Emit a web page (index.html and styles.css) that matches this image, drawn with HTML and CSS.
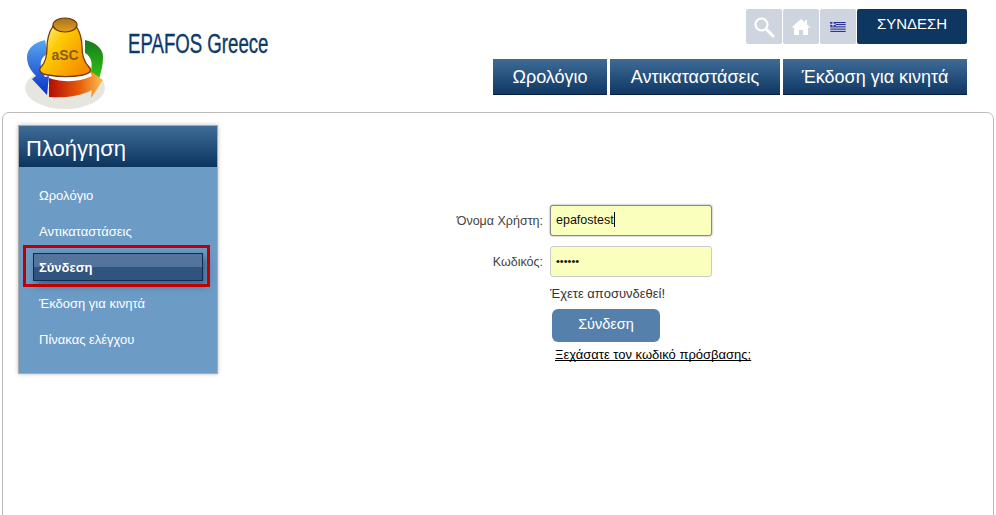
FILE: index.html
```html
<!DOCTYPE html>
<html lang="el">
<head>
    <meta charset="UTF-8">
    <meta name="viewport" content="width=device-width, initial-scale=1.0">
    <title>EPAFOS Greece</title>
    <link rel="stylesheet" href="styles.css">
</head>
<body>
    <header class="top">
        <div class="brand">
            <svg class="logo" width="90" height="100" viewBox="5 1 90 100">
                <defs>
                    <linearGradient id="bellFill" x1="0" y1="0" x2="1" y2="0.7">
                        <stop offset="0" stop-color="#fff6b0"/>
                        <stop offset="0.4" stop-color="#fdca00"/>
                        <stop offset="1" stop-color="#f68c00"/>
                    </linearGradient>
                    <linearGradient id="knobFill" x1="0" y1="0" x2="0" y2="1">
                        <stop offset="0" stop-color="#a8721c"/>
                        <stop offset="1" stop-color="#e0a020"/>
                    </linearGradient>
                    <linearGradient id="redArrow" x1="0" y1="0" x2="1" y2="0">
                        <stop offset="0" stop-color="#b40c08"/>
                        <stop offset="0.55" stop-color="#e65a08"/>
                        <stop offset="1" stop-color="#fdc050"/>
                    </linearGradient>
                    <linearGradient id="blueArrow" x1="0" y1="0" x2="0" y2="1">
                        <stop offset="0" stop-color="#58a8f0"/>
                        <stop offset="1" stop-color="#0a2fc8"/>
                    </linearGradient>
                    <linearGradient id="greenArrow" x1="0" y1="0" x2="0" y2="1">
                        <stop offset="0" stop-color="#167a20"/>
                        <stop offset="1" stop-color="#30c410"/>
                    </linearGradient>
                </defs>
                <ellipse cx="50" cy="78" rx="40" ry="21" fill="#e6e6de"/>
                <ellipse cx="50" cy="66" rx="30" ry="13" fill="#fff"/>
                <path d="M30 30 C18 33 12 39 12 47 C12 54 15 60 21 66 L17 69 L32 85 L34 66 L30 67 C27 62 25 56 26 52 C27 47 30 45 33 44Z" fill="url(#blueArrow)"/>
                <path d="M70 30 C82 33 88 39 88 47 C88 56 86 62 84 69 L76 62 C77 56 77 51 75 48 C73 45 72 44 70 43Z" fill="url(#greenArrow)"/>
                <path d="M34 68 C50 73 64 72 77 66 L74 60 L88 70 L76 88 L77 80 C64 87 47 88 34 87Z" fill="url(#redArrow)"/>
                <path d="M38 16 C34 22 32 30 32 38 C32 48 30 53 26 57 C23 60 25 64 33 65 C44 67 58 67 68 65 C76 63 77 60 74 57 C69 52 67 46 67 37 C67 29 65 22 61 16Z" fill="url(#bellFill)" stroke="#7a3c00" stroke-width="1.300"/>
                <ellipse cx="50" cy="15" rx="12" ry="7" fill="url(#knobFill)" stroke="#6a3400" stroke-width="1.200"/>
                <text class="logo-text" x="50" y="50" text-anchor="middle">aSC</text>
            </svg>
            <div class="site-name">EPAFOS Greece</div>
        </div>
        <div class="top-right">
            <div class="tools">
                <a class="tool" href="#">
                    <svg width="24" height="24" viewBox="0 0 24 24">
                        <circle cx="9.500" cy="9.500" r="6" fill="none" stroke="#fff" stroke-width="2.200"/>
                        <path d="M14.500 14.500 L21 21" stroke="#fff" stroke-width="3" stroke-linecap="round"/>
                    </svg>
                </a>
                <a class="tool" href="#">
                    <svg width="20" height="18" viewBox="0 0 20 18">
                        <path d="M10 1 L0.500 9.500 L3 9.500 L3 17 L8 17 L8 12 L12 12 L12 17 L17 17 L17 9.500 L19.500 9.500 L16 6.400 L16 2 L14 2 L14 4.600Z" fill="#fff"/>
                    </svg>
                </a>
                <a class="tool" href="#">
                    <svg width="16" height="10" viewBox="0 0 17 11">
                        <rect width="17" height="11" fill="#eef0f8"/>
                        <path d="M0 0.600H17M0 3H17M0 5.400H17M0 7.800H17M0 10.200H17" stroke="#2a3496" stroke-width="1.400"/>
                        <rect width="6" height="5" fill="#2a3496"/>
                        <path d="M3 0V5M0 2.500H6" stroke="#fff" stroke-width="1"/>
                    </svg>
                </a>
                <a class="login-tab" href="#">ΣΥΝΔΕΣΗ</a>
            </div>
            <nav class="main-nav">
                <a href="#">Ωρολόγιο</a>
                <a href="#">Αντικαταστάσεις</a>
                <a href="#">Έκδοση για κινητά</a>
            </nav>
        </div>
    </header>

    <main class="panel">
        <aside class="sidebar">
            <h2>Πλοήγηση</h2>
            <ul>
                <li><a href="#">Ωρολόγιο</a></li>
                <li><a href="#">Αντικαταστάσεις</a></li>
                <li class="current"><a href="#">Σύνδεση</a></li>
                <li><a href="#">Έκδοση για κινητά</a></li>
                <li><a href="#">Πίνακας ελέγχου</a></li>
            </ul>
        </aside>

        <form class="login-form" onsubmit="return false">
            <div class="row">
                <label for="user">Όνομα Χρήστη:</label>
                <div class="field focused" id="user">epafostest<span class="caret"></span></div>
            </div>
            <div class="row">
                <label for="pass">Κωδικός:</label>
                <div class="field dots" id="pass">••••••</div>
            </div>
            <div class="form-rest">
                <p class="msg">Έχετε αποσυνδεθεί!</p>
                <button type="submit">Σύνδεση</button>
                <a class="forgot" href="#">Ξεχάσατε τον κωδικό πρόσβασης;</a>
            </div>
        </form>

        <div class="highlight"></div>
    </main>
</body>
</html>
```

FILE: styles.css
```css
html, body {
    height: 515px;
    overflow: hidden;
}

body {
    margin: 0;
    background: #fff;
    font-family: 'Liberation Sans', Arial, sans-serif;
    color: #333;
}

a {
    text-decoration: none;
}

.top {
    display: flex;
    justify-content: space-between;
    height: 112px;
    padding: 0 29px 0 20px;
    box-sizing: border-box;
}

.brand {
    display: flex;
    align-items: flex-start;
}

.logo {
    margin-top: 11px;
    flex: none;
}

.logo-text {
    font-family: 'Liberation Sans', Arial, sans-serif;
    font-size: 14px;
    font-weight: bold;
    fill: #8a5a20;
}

.site-name {
    margin: 28px 0 0 18px;
    font-size: 27px;
    line-height: 32px;
    color: #0e3a68;
    white-space: nowrap;
    transform: scaleX(0.69);
    transform-origin: left;
    -webkit-text-stroke: 0.4px #0e3a68;
}

.top-right {
    display: flex;
    flex-direction: column;
    align-items: flex-end;
}

.tools {
    display: flex;
    gap: 1px;
    margin-top: 9px;
    height: 35px;
}

.tool {
    display: flex;
    align-items: center;
    justify-content: center;
    width: 36px;
    background: #cfd5de;
    border-radius: 2px;
}

.login-tab {
    width: 110px;
    background: #0d3761;
    color: #fff;
    font-size: 15px;
    line-height: 29px;
    text-align: center;
    border-radius: 2px;
}

.main-nav {
    display: flex;
    gap: 3px;
    margin-top: 15px;
}

.main-nav a {
    display: block;
    height: 36px;
    background: linear-gradient(#3f6b98, #0f3863);
    border-bottom: 1px solid #05203f;
    box-sizing: border-box;
    color: #fff;
    font-size: 18px;
    line-height: 37px;
    text-align: center;
    white-space: nowrap;
}

.main-nav a:nth-child(1) {
    width: 114px;
}

.main-nav a:nth-child(2) {
    width: 170px;
}

.main-nav a:nth-child(3) {
    width: 184px;
}

.panel {
    position: relative;
    display: flex;
    margin: 0 2px;
    height: 420px;
    padding: 12px 15px;
    box-sizing: border-box;
    border: 1px solid #bbb;
    border-radius: 7px 7px 0 0;
}

.sidebar {
    width: 200px;
    height: 249px;
    flex: none;
    box-sizing: border-box;
    background: #6c9bc6;
    border: 1px solid #aaa;
    box-shadow: 0 0 4px rgba(0, 0, 0, 0.25);
}

.sidebar h2 {
    margin: 0;
    height: 41px;
    padding-left: 7px;
    background: linear-gradient(#3f6b98, #0b355f);
    color: #fff;
    font-size: 22px;
    font-weight: normal;
    line-height: 46px;
}

.sidebar ul {
    list-style: none;
    margin: 0;
    padding: 10px 14px 0;
}

.sidebar li {
    height: 36px;
    display: flex;
    align-items: center;
}

.sidebar li a {
    display: block;
    width: 100%;
    padding: 2px 0 0 6px;
    box-sizing: border-box;
    color: #fff;
    font-size: 13px;
    line-height: 28px;
}

.sidebar li.current a {
    height: 28px;
    padding: 0 0 0 5px;
    background: linear-gradient(#54749b 50%, #31547f 50%);
    border: 1px solid #0c2e56;
    box-shadow: 3px 4px 8px rgba(20, 40, 70, 0.55);
    font-weight: bold;
    line-height: 27px;
}

.login-form {
    margin: 80px 0 0 220px;
    width: 340px;
    font-size: 12.5px;
}

.row {
    display: flex;
    align-items: center;
    height: 31px;
    margin-bottom: 10px;
}

.row label {
    width: 105px;
    margin-right: 7px;
    flex: none;
    text-align: right;
    white-space: nowrap;
    color: #444;
}

.field {
    width: 162px;
    height: 31px;
    box-sizing: border-box;
    padding-left: 5px;
    background: #fbffbd;
    border: 1px solid #ccc;
    border-radius: 3px;
    color: #111;
    font-size: 12.5px;
    line-height: 29px;
}

.field.focused {
    border-color: #888;
    box-shadow: 0 0 2px rgba(0, 0, 0, 0.5);
}

.field.dots {
    font-size: 11px;
}

.caret {
    display: inline-block;
    width: 1px;
    height: 15px;
    background: #000;
    vertical-align: -3px;
}

.form-rest {
    margin-top: -1px;
    margin-left: 112px;
}

.msg {
    margin: 0;
    font-size: 13px;
    line-height: 15px;
    color: #333;
}

button {
    display: block;
    width: 108px;
    height: 33px;
    margin: 8px 0 0 2px;
    padding-bottom: 4px;
    background: #5580ab;
    border: none;
    border-radius: 6px;
    color: #fff;
    font-family: 'Liberation Sans', Arial, sans-serif;
    font-size: 14.5px;
    cursor: pointer;
}

.forgot {
    display: block;
    margin: 5px 0 0 5px;
    color: #000;
    font-size: 13px;
    line-height: 15px;
    text-decoration: underline;
    text-decoration-skip-ink: none;
    white-space: nowrap;
}

/* red annotation box over the current menu item */
.highlight {
    position: absolute;
    left: 20px;
    top: 132px;
    width: 181px;
    height: 36px;
    border: 3px solid #c00000;
}
```
